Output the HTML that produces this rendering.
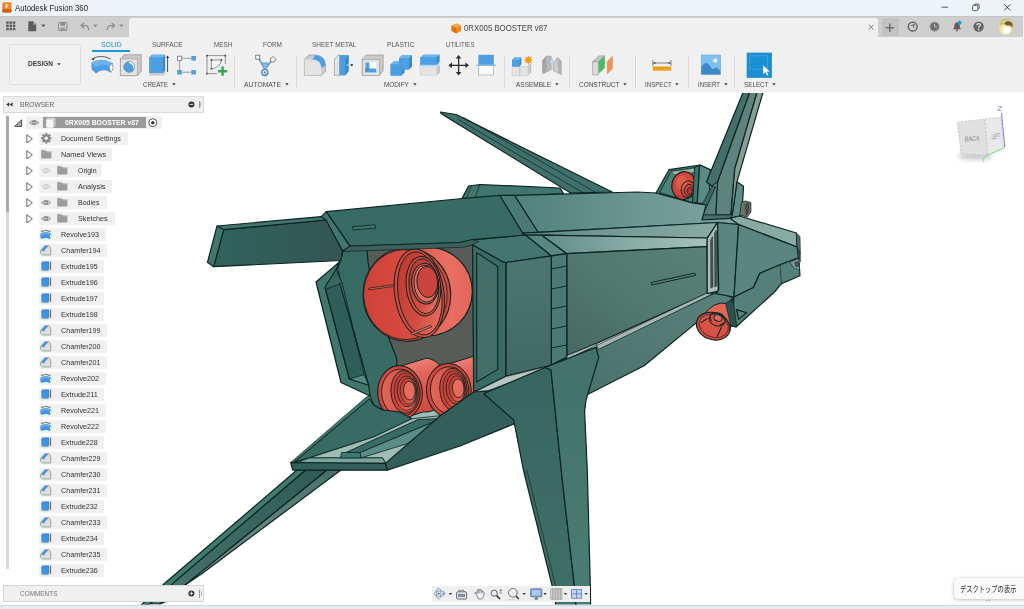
<!DOCTYPE html>
<html lang="ja"><head><meta charset="utf-8"><title>Autodesk Fusion 360</title>
<style>
html,body{margin:0;padding:0;}
body{width:1024px;height:609px;overflow:hidden;background:#fff;font-family:"Liberation Sans","Noto Sans CJK JP",sans-serif;}
#app{position:relative;width:1024px;height:609px;overflow:hidden;background:#fff;}
#canvas{position:absolute;left:0;top:0;width:1024px;height:609px;}
.t{position:absolute;white-space:nowrap;display:inline-block;transform-origin:0 50%;}
.i{position:absolute;overflow:visible;}
.row{position:absolute;background:#f0f0f0;height:12.6px;}
</style></head><body><div id="app">
<div id="canvas">
<svg class="i" style="left:0;top:0" width="1024" height="609" viewBox="0 0 1024 609"><defs>
<linearGradient id="gTop" x1="0" y1="0" x2="1" y2="0"><stop offset="0" stop-color="#4f817a"/><stop offset="0.55" stop-color="#6d9791"/><stop offset="1" stop-color="#7fa39d"/></linearGradient>
<linearGradient id="gSlab" x1="0" y1="0" x2="1" y2="0"><stop offset="0" stop-color="#30625c"/><stop offset="1" stop-color="#345651"/></linearGradient>
<linearGradient id="gB1" x1="0" y1="0" x2="1" y2="0"><stop offset="0" stop-color="#5a8680"/><stop offset="0.5" stop-color="#769c95"/><stop offset="1" stop-color="#88aaa3"/></linearGradient>
<linearGradient id="gCh" x1="0" y1="0" x2="1" y2="0"><stop offset="0" stop-color="#5e8d86"/><stop offset="0.5" stop-color="#86aaa3"/><stop offset="1" stop-color="#a6c1bb"/></linearGradient>
<linearGradient id="gSide" x1="1" y1="0" x2="0" y2="1"><stop offset="0" stop-color="#5a8178"/><stop offset="0.5" stop-color="#52796f"/><stop offset="1" stop-color="#476862"/></linearGradient>
<linearGradient id="gUnder" x1="0" y1="1" x2="1" y2="0"><stop offset="0" stop-color="#3f6a64"/><stop offset="0.5" stop-color="#4f7770"/><stop offset="1" stop-color="#5a8179"/></linearGradient>
<linearGradient id="gRB" x1="0" y1="0" x2="0" y2="1"><stop offset="0" stop-color="#4c7770"/><stop offset="1" stop-color="#416964"/></linearGradient>
<linearGradient id="gLegL" x1="0" y1="0" x2="0" y2="1"><stop offset="0" stop-color="#376660"/><stop offset="1" stop-color="#3f7068"/></linearGradient>
<linearGradient id="gLegR" x1="0" y1="0" x2="0" y2="1"><stop offset="0" stop-color="#427269"/><stop offset="1" stop-color="#4a7d73"/></linearGradient>
<linearGradient id="gFin3" x1="1" y1="0" x2="0" y2="1"><stop offset="0" stop-color="#456e68"/><stop offset="1" stop-color="#86a39c"/></linearGradient>
<linearGradient id="gFin2" x1="1" y1="0" x2="0" y2="1"><stop offset="0" stop-color="#2f5a55"/><stop offset="1" stop-color="#4a756e"/></linearGradient>
<linearGradient id="gRed" x1="0" y1="0" x2="1" y2="0"><stop offset="0" stop-color="#d24a3f"/><stop offset="0.75" stop-color="#e96f62"/><stop offset="1" stop-color="#e4655a"/></linearGradient>
<linearGradient id="gCup" x1="0" y1="0" x2="1" y2="0"><stop offset="0" stop-color="#cd4238"/><stop offset="0.5" stop-color="#d94a3f"/><stop offset="1" stop-color="#dc5045"/></linearGradient>
<linearGradient id="gCup2" x1="0" y1="0" x2="1" y2="1"><stop offset="0" stop-color="#b8372e"/><stop offset="0.55" stop-color="#d24a3f"/><stop offset="1" stop-color="#ea7b6d"/></linearGradient>
<linearGradient id="gRedV" x1="0" y1="0" x2="0.25" y2="1"><stop offset="0" stop-color="#f09183"/><stop offset="0.35" stop-color="#e2645a"/><stop offset="1" stop-color="#cf463b"/></linearGradient>
<linearGradient id="gCup3" x1="0" y1="0" x2="1" y2="0"><stop offset="0" stop-color="#e2665a"/><stop offset="1" stop-color="#d04439"/></linearGradient>
<clipPath id="cs"><rect x="420" y="350" width="54.4" height="80"/></clipPath>
<clipPath id="cv"><rect x="0" y="92.6" width="1024" height="512"/></clipPath>
</defs><g clip-path="url(#cv)">
<path d="M440.5 112.0L456.0 114.5L612.2 192.0L571.0 193.2L454.7 122.0L441.0 113.4Z" fill="#40706a" stroke="#0b2421" stroke-width="1.2" stroke-linejoin="round"/>
<path d="M463.5 117.4L596.0 192.6" fill="none" stroke="#0b2421" stroke-width="0.7" stroke-linecap="round" stroke-linejoin="round"/>
<path d="M458.5 119.6L583.5 193.0" fill="none" stroke="#0b2421" stroke-width="0.7" stroke-linecap="round" stroke-linejoin="round"/>
<path d="M462.0 198.6L468.5 186.0L480.0 184.5L560.0 188.0L563.5 193.6L520.0 196.0Z" fill="#41766e" stroke="#0b2421" stroke-width="1.2" stroke-linejoin="round"/>
<path d="M480.0 184.5L475.0 197.6" fill="none" stroke="#0b2421" stroke-width="0.7" stroke-linecap="round" stroke-linejoin="round"/>
<path d="M471.5 185.6L466.5 198.2" fill="none" stroke="#0b2421" stroke-width="0.6" stroke-linecap="round" stroke-linejoin="round"/>
<path d="M656.0 193.0L669.0 169.7L700.0 165.0L710.3 169.7L709.0 204.0L692.5 203.0Z" fill="#41786f" stroke="#0b2421" stroke-width="1.2" stroke-linejoin="round"/>
<path d="M659.6 192.6L671.0 171.4L696.6 167.6L692.5 202.5Z" fill="#4d817a" stroke="#0b2421" stroke-width="0.8" stroke-linejoin="round"/>
<path d="M671.0 171.4L696.6 167.6L695.6 172.4L674.4 175.0Z" fill="#98b4ad" stroke="#0b2421" stroke-width="0.6" stroke-linejoin="round"/>
<ellipse cx="683.8" cy="185.6" rx="12" ry="14" fill="#c53d34" stroke="#0b2421" stroke-width="1.1" transform="rotate(8 683.8 185.6)"/>
<ellipse cx="683.2" cy="184.6" rx="9.6" ry="11.6" fill="#d3473c" transform="rotate(8 683.2 184.6)"/>
<ellipse cx="681.6" cy="182.6" rx="5.6" ry="7" fill="#dd5b4f" transform="rotate(8 681.6 182.6)"/>
<ellipse cx="688" cy="189.4" rx="6.8" ry="8.6" fill="none" stroke="#0b2421" stroke-width="0.9" transform="rotate(8 688 189.4)"/>
<ellipse cx="689" cy="190.4" rx="4.6" ry="6" fill="none" stroke="#0b2421" stroke-width="0.9" transform="rotate(8 689 190.4)"/>
<ellipse cx="689.8" cy="191" rx="2.6" ry="3.6" fill="#b8362d" stroke="#0b2421" stroke-width="0.8" transform="rotate(8 689.8 191)"/>
<path d="M694.6 167.8L699.6 165.2L697.2 203.0L692.5 202.5Z" fill="#3d746c" stroke="#0b2421" stroke-width="0.9" stroke-linejoin="round"/>
<path d="M699.6 165.2L700.0 165.0L710.3 169.7L709.0 204.0L697.2 203.0Z" fill="#5a8b84" stroke="#0b2421" stroke-width="1.2" stroke-linejoin="round"/>
<path d="M736.9 181.8L743.5 186.2L742.0 213.0L740.4 216.4L731.0 218.4L732.4 213.5Z" fill="#5f8c86" stroke="#0b2421" stroke-width="1.2" stroke-linejoin="round"/>
<path d="M741.3 202.4L745.0 201.0L750.9 202.4L750.9 212.0L747.2 217.2L739.8 215.0Z" fill="#6f706a" stroke="#0b2421" stroke-width="0.7" stroke-linejoin="round"/>
<path d="M745.6 204.0L748.6 203.6L748.4 212.0L746.0 215.0Z" fill="#55564f" stroke="#0b2421" stroke-width="0.5" stroke-linejoin="round"/>
<path d="M744.0 90.0L750.6 90.0L717.7 181.8L711.8 186.2L706.6 181.8Z" fill="#44706b" stroke="#0b2421" stroke-width="1.2" stroke-linejoin="round"/>
<path d="M711.8 186.2L715.5 187.0L702.9 215.0L697.0 214.3Z" fill="#3b6661" stroke="#0b2421" stroke-width="0.7" stroke-linejoin="round"/>
<path d="M717.7 181.8L711.8 186.2L715.5 187.0L702.9 215.0L715.9 214.6L716.6 200.0Z" fill="#587f79" stroke="#0b2421" stroke-width="0.7" stroke-linejoin="round"/>
<path d="M750.6 90.0L757.7 90.0L734.7 169.2L731.0 215.0L715.9 214.6L716.6 200.0L717.7 181.8Z" fill="#5d837c" stroke="#0b2421" stroke-width="1.2" stroke-linejoin="round"/>
<path d="M757.7 90.0L763.7 90.0L736.9 181.8L732.4 213.5L731.0 215.0L734.7 169.2Z" fill="#879e97" stroke="#0b2421" stroke-width="1.2" stroke-linejoin="round"/>
<path d="M697.0 214.3L702.9 215.0L731.0 215.0L732.4 213.5L731.0 218.2L716.2 219.4L702.2 220.2Z" fill="#4a6f6a" stroke="#0b2421" stroke-width="0.7" stroke-linejoin="round"/>
<path d="M472.0 392.4L506.0 375.0L551.0 364.0L566.8 356.0L598.0 346.0L601.0 352.0L522.0 421.0L474.0 397.0Z" fill="#33605a"/>
<path d="M487.5 388.7L596.0 347.5L713.3 293.6L718.0 291.4L733.0 298.0L726.3 304.4L695.6 323.4L644.1 365.8L589.0 393.8L513.7 423.7Z" fill="url(#gUnder)" stroke="#0b2421" stroke-width="1.2" stroke-linejoin="round"/>
<path d="M514.4 195.3L637.5 192.0L656.0 193.0L692.5 202.8L706.0 205.0L702.0 220.0L730.0 218.3L739.4 216.0L738.6 224.5L717.5 222.5L538.0 232.3Z" fill="url(#gTop)" stroke="#0b2421" stroke-width="1.2" stroke-linejoin="round"/>
<path d="M499.6 195.3L514.4 195.3L538.0 232.3L522.5 233.0Z" fill="#4a7a74" stroke="#0b2421" stroke-width="1.2" stroke-linejoin="round"/>
<path d="M538.0 232.3L717.5 222.5L707.5 238.0L541.7 235.2L525.5 234.8L522.5 233.0Z" fill="url(#gB1)" stroke="#0b2421" stroke-width="1.2" stroke-linejoin="round"/>
<path d="M541.7 235.2L707.5 238.0L707.0 246.6L566.8 253.7Z" fill="url(#gCh)" stroke="#0b2421" stroke-width="1.2" stroke-linejoin="round"/>
<path d="M525.5 235.0L541.7 235.2L566.8 253.7L551.3 255.9Z" fill="#5a8680" stroke="#0b2421" stroke-width="1.2" stroke-linejoin="round"/>
<path d="M566.8 253.7L707.0 246.6L707.4 293.4L596.0 343.6L566.8 355.6Z" fill="url(#gSide)" stroke="#0b2421" stroke-width="1.2" stroke-linejoin="round"/>
<path d="M706.5 293.2L713.3 293.6L598.0 349.6L596.0 343.6L566.8 355.6L566.8 359.4Z" fill="#a9b7b2" stroke="#0b2421" stroke-width="0.7" stroke-linejoin="round"/>
<path d="M651.0 282.5L695.0 273.0L695.6 275.4L651.6 285.0Z" fill="#557a73" stroke="#0b2421" stroke-width="0.9" stroke-linejoin="round"/>
<path d="M551.3 255.9L566.8 253.7L566.8 357.0L551.3 365.0Z" fill="#4a7a73" stroke="#0b2421" stroke-width="1.2" stroke-linejoin="round"/>
<path d="M551.3 269.0L566.8 266.0" fill="none" stroke="#0b2421" stroke-width="0.9" stroke-linecap="round" stroke-linejoin="round"/>
<path d="M551.3 289.0L566.8 286.0" fill="none" stroke="#0b2421" stroke-width="0.9" stroke-linecap="round" stroke-linejoin="round"/>
<path d="M551.3 309.0L566.8 306.0" fill="none" stroke="#0b2421" stroke-width="0.9" stroke-linecap="round" stroke-linejoin="round"/>
<path d="M551.3 329.0L566.8 326.0" fill="none" stroke="#0b2421" stroke-width="0.9" stroke-linecap="round" stroke-linejoin="round"/>
<path d="M551.3 348.0L566.8 345.0" fill="none" stroke="#0b2421" stroke-width="0.9" stroke-linecap="round" stroke-linejoin="round"/>
<path d="M707.2 238.4L717.5 222.5L718.2 291.2L707.2 293.6Z" fill="#aebcb7" stroke="#0b2421" stroke-width="1.2" stroke-linejoin="round"/>
<path d="M710.6 240.0L712.6 236.6L713.0 287.0L710.8 288.0Z" fill="#4a5a57" stroke="#0b2421" stroke-width="0.5" stroke-linejoin="round"/>
<path d="M714.6 233.0L716.4 230.0L716.8 286.0L714.8 286.8Z" fill="#4a5a57" stroke="#0b2421" stroke-width="0.5" stroke-linejoin="round"/>
<path d="M717.5 222.5L738.6 224.5L734.0 297.0L716.0 293.7L718.7 290.0Z" fill="#5a8680" stroke="#0b2421" stroke-width="1.2" stroke-linejoin="round"/>
<path d="M730.0 218.3L739.4 216.0L796.4 233.0L797.0 247.0L738.6 224.5Z" fill="#88aaa3" stroke="#0b2421" stroke-width="1.2" stroke-linejoin="round"/>
<path d="M738.6 224.5L797.0 247.0L798.7 257.8L780.0 264.8L759.7 273.4L753.4 287.5L734.0 297.0Z" fill="#5b867f" stroke="#0b2421" stroke-width="1.2" stroke-linejoin="round"/>
<path d="M734.0 297.0L753.4 287.5L759.7 273.4L780.0 264.8L798.7 257.8L800.0 275.8L781.5 283.6L774.5 292.0L736.0 327.0L731.5 325.8Z" fill="#557f79" stroke="#0b2421" stroke-width="1.2" stroke-linejoin="round"/>
<path d="M780.0 264.8L781.5 283.6" fill="none" stroke="#0b2421" stroke-width="0.6" stroke-linecap="round" stroke-linejoin="round"/>
<path d="M796.4 233.0L800.0 236.4L800.4 254.0L797.0 247.0Z" fill="#4c6f6a" stroke="#0b2421" stroke-width="0.6" stroke-linejoin="round"/>
<path d="M797.0 247.0L800.4 254.0L800.4 262.0L798.7 257.8Z" fill="#3c4a48" stroke="#0b2421" stroke-width="0.5" stroke-linejoin="round"/>
<path d="M790.0 262.0L798.7 258.6L799.6 270.0L794.0 268.4Z" fill="#7f9a94" stroke="#0b2421" stroke-width="0.5" stroke-linejoin="round"/>
<path d="M794.6 262.6L798.4 261.6L798.8 266.4L795.6 266.6Z" fill="#4a5452" stroke="#0b2421" stroke-width="0.4" stroke-linejoin="round"/>
<path d="M703 316Q714 300.6 726.4 303.4Q733.6 309 731.6 322L729.6 332L712 338Z" fill="#e1675b" stroke="#0b2421" stroke-width="1"/>
<ellipse cx="713.2" cy="326.2" rx="17.2" ry="13.4" fill="#d5483d" stroke="#0b2421" stroke-width="1.2" transform="rotate(20 713.2 326.2)"/>
<ellipse cx="713.8" cy="325.8" rx="15" ry="11.4" fill="#d95045" stroke="#0b2421" stroke-width="0.6" transform="rotate(20 713.8 325.8)"/>
<ellipse cx="717.2" cy="319.4" rx="8.2" ry="6.4" fill="none" stroke="#0b2421" stroke-width="1.1" transform="rotate(20 717.2 319.4)"/>
<ellipse cx="718" cy="318" rx="4.2" ry="3.2" fill="#e3695c" stroke="#0b2421" stroke-width="1.0" transform="rotate(20 718 318)"/>
<path d="M701.6 322.4L707.0 318.6" fill="none" stroke="#0b2421" stroke-width="1.1" stroke-linecap="round" stroke-linejoin="round"/>
<path d="M721.4 327.6L717.2 336.2" fill="none" stroke="#0b2421" stroke-width="1.1" stroke-linecap="round" stroke-linejoin="round"/>
<path d="M709.6 316.0L711.4 320.6" fill="none" stroke="#0b2421" stroke-width="0.9" stroke-linecap="round" stroke-linejoin="round"/>
<path d="M724.6 322.6L720.6 324.6" fill="none" stroke="#0b2421" stroke-width="0.9" stroke-linecap="round" stroke-linejoin="round"/>
<path d="M725.6 303.4L733.0 298.6L736.8 327.0L731.0 326.2Z" fill="#2a524d" stroke="#0b2421" stroke-width="0.7" stroke-linejoin="round"/>
<path d="M736.6 309.6L746.6 312.8L738.6 319.4Z" fill="#557f79" stroke="#0b2421" stroke-width="1.2" stroke-linejoin="round"/>
<path d="M731.5 303.0L734.0 297.0" fill="none" stroke="#0b2421" stroke-width="0.6" stroke-linecap="round" stroke-linejoin="round"/>
<path d="M360.0 247.0L476.0 243.0L477.0 394.0L380.0 402.0Z" fill="#585c59"/>
<path d="M382.5 410.0L400.0 404.0L478.0 388.0L478.0 396.0L440.0 417.5L412.0 418.7L390.0 428.7Z" fill="#9fbdb5"/>
<path d="M342.5 252.0L345.0 246.5L367.0 249.0L368.0 262.0L374.0 296.0L387.5 335.0L396.6 358.0L397.0 372.0L384.0 392.0L382.5 410.0L373.7 405.0L370.0 396.0L367.5 385.0L337.5 268.5L340.0 261.5Z" fill="#396b65" stroke="#0b2421" stroke-width="1.2" stroke-linejoin="round"/>
<path d="M342.5 252.0L340.0 261.5L316.0 282.0L341.0 382.5L370.0 396.0L368.6 385.0L349.4 379.0L325.1 287.3L336.1 269.6Z" fill="#41766e" stroke="#0b2421" stroke-width="1.2" stroke-linejoin="round"/>
<path d="M325.1 287.3L336.1 269.6L368.6 385.0L349.4 379.0Z" fill="#2f5d57" stroke="#0b2421" stroke-width="1.2" stroke-linejoin="round"/>
<path d="M336.1 269.6L342.0 282.9L364.2 374.6L368.6 385.0Z" fill="#3c6e68" stroke="#0b2421" stroke-width="0.8" stroke-linejoin="round"/>
<path d="M325.1 287.3L336.1 269.6L342.0 282.9L327.2 288.8Z" fill="#37665f" stroke="#0b2421" stroke-width="0.8" stroke-linejoin="round"/>
<path d="M349.4 379.0L364.2 374.6L368.6 385.0Z" fill="#5a8780" stroke="#0b2421" stroke-width="0.8" stroke-linejoin="round"/>
<ellipse cx="427.3" cy="291.5" rx="45" ry="44.4" fill="url(#gRed)" stroke="#0b2421" stroke-width="1.1"/>
<ellipse cx="406.9" cy="294.6" rx="43.8" ry="46.6" fill="#d3473c" stroke="#0b2421" stroke-width="1.1" transform="rotate(-3 406.9 294.6)"/>
<ellipse cx="405.4" cy="294.6" rx="41.8" ry="45" fill="url(#gCup)" stroke="#0b2421" stroke-width="0.8" transform="rotate(-3 405.4 294.6)"/>
<ellipse cx="419.3" cy="293.3" rx="24.6" ry="44.6" fill="#d74a3f" stroke="#0b2421" stroke-width="1.0" transform="rotate(-8 419.3 293.3)"/>
<ellipse cx="419.8" cy="293.3" rx="21.8" ry="41.800000000000004" fill="url(#gCup2)" stroke="#0b2421" stroke-width="0.9" transform="rotate(-8 419.8 293.3)"/>
<ellipse cx="423.4" cy="286.2" rx="17.2" ry="29.8" fill="#d74a3f" stroke="#0b2421" stroke-width="1.0" transform="rotate(-6 423.4 286.2)"/>
<ellipse cx="423.9" cy="286.2" rx="14.799999999999999" ry="27.400000000000002" fill="url(#gCup2)" stroke="#0b2421" stroke-width="0.9" transform="rotate(-6 423.9 286.2)"/>
<ellipse cx="425.1" cy="283.7" rx="13.4" ry="20.4" fill="#dc5348" stroke="#0b2421" stroke-width="1.0" transform="rotate(-5 425.1 283.7)"/>
<ellipse cx="425.6" cy="283.7" rx="11.6" ry="18.599999999999998" fill="#e46d60" stroke="#0b2421" stroke-width="0.9" transform="rotate(-5 425.6 283.7)"/>
<ellipse cx="427.3" cy="281.9" rx="10.4" ry="15.6" fill="#c9443a" stroke="#0b2421" stroke-width="0.9" transform="rotate(-4 427.3 281.9)"/>
<path d="M368.5 288.2L393.8 284.6L394.0 286.4L368.8 290.0Z" fill="#e0584c" stroke="#0b2421" stroke-width="0.7" stroke-linejoin="round"/>
<path d="M411.0 333.2L430.9 325.2L431.6 326.8L412.0 335.0Z" fill="#e87a6c" stroke="#0b2421" stroke-width="0.7" stroke-linejoin="round"/>
<path d="M401.6 365.8L426.6 358.1A22.3 26.9 -4 0 1 423.4 411.9L398.4 419.59999999999997Z" fill="url(#gRedV)" stroke="#0b2421" stroke-width="1"/>
<ellipse cx="400" cy="392.7" rx="22.3" ry="26.9" fill="#d6463b" stroke="#0b2421" stroke-width="1.0" transform="rotate(-4 400 392.7)"/>
<ellipse cx="400.8" cy="392.7" rx="19.2" ry="23.6" fill="url(#gCup3)" stroke="#0b2421" stroke-width="0.9" transform="rotate(-4 400.8 392.7)"/>
<ellipse cx="404.6" cy="392.0" rx="13.6" ry="21.3" fill="#cf4439" stroke="#0b2421" stroke-width="0.9" transform="rotate(-4 404.6 392.0)"/>
<ellipse cx="405.6" cy="391.8" rx="11.4" ry="18.8" fill="url(#gCup2)" stroke="#0b2421" stroke-width="0.6" transform="rotate(-4 405.6 391.8)"/>
<ellipse cx="407" cy="391.3" rx="9.6" ry="15.4" fill="#cf4439" stroke="#0b2421" stroke-width="0.8" transform="rotate(-4 407 391.3)"/>
<ellipse cx="408" cy="391.09999999999997" rx="7.8" ry="13" fill="url(#gCup2)" stroke="#0b2421" stroke-width="0.6" transform="rotate(-4 408 391.09999999999997)"/>
<ellipse cx="409.4" cy="390.7" rx="5.8" ry="9.4" fill="#e66a5d" stroke="#0b2421" stroke-width="0.8" transform="rotate(-4 409.4 390.7)"/>
<g clip-path="url(#cs)">
<path d="M450.40000000000003 363.40000000000003L475.40000000000003 355.70000000000005A22.3 26.9 -4 0 1 472.2 409.5L447.2 417.2Z" fill="url(#gRedV)" stroke="#0b2421" stroke-width="1"/>
<ellipse cx="448.8" cy="390.3" rx="22.3" ry="26.9" fill="#d6463b" stroke="#0b2421" stroke-width="1.0" transform="rotate(-4 448.8 390.3)"/>
<ellipse cx="449.6" cy="390.3" rx="19.2" ry="23.6" fill="url(#gCup3)" stroke="#0b2421" stroke-width="0.9" transform="rotate(-4 449.6 390.3)"/>
<ellipse cx="453.40000000000003" cy="389.6" rx="13.6" ry="21.3" fill="#cf4439" stroke="#0b2421" stroke-width="0.9" transform="rotate(-4 453.40000000000003 389.6)"/>
<ellipse cx="454.40000000000003" cy="389.40000000000003" rx="11.4" ry="18.8" fill="url(#gCup2)" stroke="#0b2421" stroke-width="0.6" transform="rotate(-4 454.40000000000003 389.40000000000003)"/>
<ellipse cx="455.8" cy="388.90000000000003" rx="9.6" ry="15.4" fill="#cf4439" stroke="#0b2421" stroke-width="0.8" transform="rotate(-4 455.8 388.90000000000003)"/>
<ellipse cx="456.8" cy="388.7" rx="7.8" ry="13" fill="url(#gCup2)" stroke="#0b2421" stroke-width="0.6" transform="rotate(-4 456.8 388.7)"/>
<ellipse cx="458.2" cy="388.3" rx="5.8" ry="9.4" fill="#e66a5d" stroke="#0b2421" stroke-width="0.8" transform="rotate(-4 458.2 388.3)"/>
</g>
<path d="M472.5 244.7L503.7 262.2L506.0 262.2L506.0 376.0L476.0 391.0L473.7 391.0Z" fill="#396b65" stroke="#0b2421" stroke-width="1.2" stroke-linejoin="round"/>
<path d="M476.7 252.6L497.7 266.5L497.7 369.4L476.7 382.0Z" fill="#446f69" stroke="#0b2421" stroke-width="1.1" stroke-linejoin="round"/>
<path d="M472.5 240.0L524.7 235.0L525.5 235.0L551.3 255.9L506.2 262.5L503.7 262.2L472.5 244.7Z" fill="#447570" stroke="#0b2421" stroke-width="1.2" stroke-linejoin="round"/>
<path d="M506.2 262.5L551.3 255.9L551.3 365.0L506.0 376.0Z" fill="url(#gRB)" stroke="#0b2421" stroke-width="1.2" stroke-linejoin="round"/>
<path d="M326.2 211.7L462.5 198.5L499.6 195.3L522.5 233.0L525.5 235.0L472.5 239.6L460.0 242.7L350.0 246.2Z" fill="#396b65" stroke="#0b2421" stroke-width="1.2" stroke-linejoin="round"/>
<path d="M321.2 216.7L326.2 211.7L350.0 246.2L342.6 251.1Z" fill="#41766e" stroke="#0b2421" stroke-width="1.2" stroke-linejoin="round"/>
<path d="M350.0 246.2L460.0 242.7L472.5 239.6L478.7 241.6L472.5 244.7L463.7 247.2L342.6 251.6Z" fill="#3d605b" stroke="#0b2421" stroke-width="0.7" stroke-linejoin="round"/>
<path d="M352.5 226.7L375.0 224.8L376.0 228.0L353.5 230.0Z" fill="#41736c" stroke="#0b2421" stroke-width="0.8" stroke-linejoin="round"/>
<path d="M223.7 229.7L326.0 220.0L342.6 251.1L341.0 260.5L213.7 266.7Z" fill="url(#gSlab)" stroke="#0b2421" stroke-width="1.2" stroke-linejoin="round"/>
<path d="M217.0 226.0L321.2 216.7L326.0 220.0L223.7 229.7Z" fill="#41766e" stroke="#0b2421" stroke-width="1.2" stroke-linejoin="round"/>
<path d="M217.0 226.0L223.7 229.7L213.7 266.7L207.5 262.2Z" fill="#41766e" stroke="#0b2421" stroke-width="1.2" stroke-linejoin="round"/>
<path d="M297.0 470.0L305.8 470.0L176.4 580.4L150.0 604.0L140.0 606.0L165.0 583.0Z" fill="#3f7a71" stroke="#0b2421" stroke-width="1.2" stroke-linejoin="round"/>
<path d="M305.8 470.0L327.2 470.0L187.7 582.9L160.0 604.0L150.0 604.0L176.4 580.4Z" fill="url(#gFin2)" stroke="#0b2421" stroke-width="1.2" stroke-linejoin="round"/>
<path d="M327.2 470.0L341.0 470.0L201.5 574.0L186.5 584.0L170.0 600.0L160.0 604.0L187.7 582.9Z" fill="url(#gFin3)" stroke="#0b2421" stroke-width="1.2" stroke-linejoin="round"/>
<path d="M369.6 398.6L293.4 462.6L309.3 457.9L373.8 437.0L412.0 418.7L400.0 412.0L382.5 410.0L373.7 405.0Z" fill="#396b65" stroke="#0b2421" stroke-width="1.2" stroke-linejoin="round"/>
<path d="M367.5 396.0L290.8 462.3L293.4 462.6L369.6 398.6L373.7 405.0L370.0 396.0Z" fill="#41766e" stroke="#0b2421" stroke-width="0.6" stroke-linejoin="round"/>
<path d="M309.3 457.9L373.8 437.0L412.0 418.7L441.0 415.6L386.0 463.6L382.5 457.9Z" fill="#9fbdb5" stroke="#0b2421" stroke-width="0.8" stroke-linejoin="round"/>
<path d="M296.6 462.8L309.3 457.9L382.5 457.9L385.5 463.4Z" fill="#7ba49c" stroke="#0b2421" stroke-width="0.8" stroke-linejoin="round"/>
<path d="M346.0 452.5L360.0 452.6L442.0 418.4L418.0 419.6Z" fill="#396b65" stroke="#0b2421" stroke-width="0.9" stroke-linejoin="round"/>
<path d="M360.0 452.6L442.0 418.4L442.4 420.4L407.0 443.8L361.0 457.9Z" fill="#5b8d86" stroke="#0b2421" stroke-width="0.8" stroke-linejoin="round"/>
<path d="M341.5 452.6L346.0 452.5L360.0 452.6L361.0 457.9L340.5 457.9Z" fill="#3f7a72" stroke="#0b2421" stroke-width="0.8" stroke-linejoin="round"/>
<path d="M290.7 462.5L385.5 463.4L387.4 470.2L292.7 470.2Z" fill="#335e59" stroke="#0b2421" stroke-width="1.2" stroke-linejoin="round"/>
<path d="M385.5 463.4L440.0 416.0L474.0 391.8L488.0 390.9L520.0 416.0L520.0 421.4L460.0 446.0L387.4 470.2Z" fill="#335e59" stroke="#0b2421" stroke-width="1.2" stroke-linejoin="round"/>
<path d="M476.0 391.4L506.0 376.6L551.0 365.6L545.0 368.0L524.0 377.6L488.0 390.6Z" fill="#b8c6c2" stroke="#0b2421" stroke-width="0.6" stroke-linejoin="round"/>
<path d="M483.7 393.7L545.0 367.5L551.0 370.0L562.5 482.0L574.3 585.3L576.0 606.0L556.0 606.0L552.0 585.3L523.4 470.0L513.7 420.0Z" fill="url(#gLegL)" stroke="#0b2421" stroke-width="1.2" stroke-linejoin="round"/>
<path d="M551.0 370.0L545.0 367.5L596.0 347.5L598.7 357.5L586.0 400.0L584.6 411.6L587.3 470.0L590.3 585.3L590.6 606.0L576.0 606.0L574.3 585.3L562.5 482.0Z" fill="url(#gLegR)" stroke="#0b2421" stroke-width="1.2" stroke-linejoin="round"/>
<path d="M526.8 470.0L555.4 585.3" fill="none" stroke="#0b2421" stroke-width="0.6" stroke-linecap="round" stroke-linejoin="round"/>
</g></svg>
</div>
<div style="position:absolute;left:0px;top:0px;width:1024px;height:15.6px;background:#eef2f9;"></div>
<svg class="i" style="left:2px;top:2px;" width="10" height="11" viewBox="0 0 10 11"><rect x="0.3" y="0.3" width="9.2" height="10.2" rx="1.6" fill="#f5811e"/><rect x="0.3" y="7.2" width="9.2" height="3.3" rx="1.2" fill="#c95a10"/><path d="M3.6 6.6V2.2H6.6V3.1H4.7V4H6.3V4.9H4.7V6.6Z" fill="#fff"/></svg>
<span class="t" style="left:15.20px;top:4.00px;font-size:8.6px;line-height:8.6px;color:#1a1a1a;transform:scaleX(0.9036);">Autodesk Fusion 360</span>
<svg class="i" style="left:938px;top:0px;" width="80" height="15" viewBox="0 0 80 15"><path d="M3.6 7.2H10" stroke="#333" stroke-width="0.8" fill="none"/><rect x="34.6" y="5.4" width="5.2" height="5.2" rx="1" fill="none" stroke="#333" stroke-width="0.8"/><path d="M36.2 5.2V4.9Q36.2 4.1 37 4.1H40.2Q41.2 4.1 41.2 5.1V8.2Q41.2 9 40.4 9" fill="none" stroke="#333" stroke-width="0.8"/><path d="M66.4 4.4L72.2 10.4M72.2 4.4L66.4 10.4" stroke="#222" stroke-width="0.85" fill="none"/></svg>
<div style="position:absolute;left:0px;top:15.6px;width:1022.6px;height:21.0px;background:#cecece;"></div>
<div style="position:absolute;left:0px;top:15.6px;width:1022.6px;height:1.799999999999999px;background:#c5c5c5;"></div>
<div style="position:absolute;left:1022.6px;top:15.6px;width:1.3999999999999773px;height:21.0px;background:#f2f2f2;"></div>
<div style="position:absolute;left:0px;top:36.6px;width:1024px;height:53.800000000000004px;background:#f0f0f0;"></div>
<div style="position:absolute;left:0px;top:90.4px;width:1024px;height:2.1999999999999886px;background:linear-gradient(#ebebeb,#fafafa);"></div>
<div style="position:absolute;left:129px;top:17.6px;width:749.4px;height:19.4px;background:#f0f0f0;border-radius:2.5px 2.5px 0 0;"></div>
<svg class="i" style="left:6px;top:21px;" width="10" height="10" viewBox="0 0 10 10"><rect x="0.2" y="0.4" width="2.5" height="2.4" fill="#5c5c5c"/><rect x="0.2" y="3.6" width="2.5" height="2.4" fill="#5c5c5c"/><rect x="0.2" y="6.800000000000001" width="2.5" height="2.4" fill="#5c5c5c"/><rect x="3.5" y="0.4" width="2.5" height="2.4" fill="#5c5c5c"/><rect x="3.5" y="3.6" width="2.5" height="2.4" fill="#5c5c5c"/><rect x="3.5" y="6.800000000000001" width="2.5" height="2.4" fill="#5c5c5c"/><rect x="6.8" y="0.4" width="2.5" height="2.4" fill="#5c5c5c"/><rect x="6.8" y="3.6" width="2.5" height="2.4" fill="#5c5c5c"/><rect x="6.8" y="6.800000000000001" width="2.5" height="2.4" fill="#5c5c5c"/></svg>
<svg class="i" style="left:28px;top:20.5px;" width="9" height="11" viewBox="0 0 9 11"><path d="M0.3 0.3H5.2L8.2 3.4V10.3H0.3Z" fill="#5c5c5c"/><path d="M5.2 0.3V3.4H8.2Z" fill="#cecece"/><path d="M5.6 0.6V3H8" fill="none" stroke="#5c5c5c" stroke-width="0.5"/></svg>
<svg class="i" style="left:41px;top:24.4px" width="5.0" height="3.75" viewBox="0 0 4 3"><path d="M0.2 0.3H3.6L1.9 2.5Z" fill="#5c5c5c"/></svg>
<svg class="i" style="left:58px;top:21.5px;" width="10" height="9.5" viewBox="0 0 10 9.5"><rect x="0.5" y="0.5" width="8.4" height="8" rx="0.6" fill="none" stroke="#8a8a8a" stroke-width="1"/><rect x="2.4" y="0.6" width="4.6" height="3" fill="#8a8a8a"/><rect x="2.2" y="5.6" width="5" height="2.9" fill="#9a9a9a"/></svg>
<svg class="i" style="left:80px;top:21.5px;" width="10" height="9" viewBox="0 0 10 9"><path d="M4.2 1L1 3.6L4.2 6.2M1.2 3.6H5.6Q8.6 3.6 8.6 8.2" fill="none" stroke="#8d8d8d" stroke-width="1.1"/></svg>
<svg class="i" style="left:93.3px;top:24.4px" width="5.0" height="3.75" viewBox="0 0 4 3"><path d="M0.2 0.3H3.6L1.9 2.5Z" fill="#8d8d8d"/></svg>
<svg class="i" style="left:106px;top:21.5px;" width="10" height="9" viewBox="0 0 10 9"><path d="M5.6 1L8.8 3.6L5.6 6.2M8.6 3.6H4.2Q1.2 3.6 1.2 8.2" fill="none" stroke="#8d8d8d" stroke-width="1.1"/></svg>
<svg class="i" style="left:119.3px;top:24.4px" width="5.0" height="3.75" viewBox="0 0 4 3"><path d="M0.2 0.3H3.6L1.9 2.5Z" fill="#8d8d8d"/></svg>
<svg class="i" style="left:451px;top:22.6px;" width="11" height="11" viewBox="0 0 11 11"><path d="M5.3 0.4L10 2.6V8L5.3 10.4L0.6 8V2.6Z" fill="#f58a1f"/><path d="M5.3 5V10.4L0.6 8V2.6Z" fill="#e0700f"/><path d="M5.3 0.4L10 2.6L5.3 5L0.6 2.6Z" fill="#fba94e"/></svg>
<span class="t" style="left:464.40px;top:23.00px;font-size:9.6px;line-height:9.6px;color:#444;transform:scaleX(0.8141);">0RX005 BOOSTER v87</span>
<svg class="i" style="left:867.5px;top:24px;" width="7" height="7" viewBox="0 0 7 7"><path d="M0.8 0.8L5.6 5.6M5.6 0.8L0.8 5.6" stroke="#777" stroke-width="0.9" fill="none"/></svg>
<div style="position:absolute;left:881.6px;top:18.4px;width:17.0px;height:17.6px;background:#c2c2c2;border-radius:1.5px;"></div>
<svg class="i" style="left:885px;top:22.5px;" width="10" height="10" viewBox="0 0 10 10"><path d="M4.8 0.6V9M0.6 4.8H9" stroke="#6e6e6e" stroke-width="1.5" fill="none"/></svg>
<svg class="i" style="left:907px;top:20.5px;" width="12" height="12" viewBox="0 0 12 12"><circle cx="5.7" cy="5.7" r="4.4" fill="none" stroke="#666" stroke-width="1.5"/><path d="M5.8 5.9L8.6 2.4L3.4 2.9Z" fill="#cecece"/><path d="M4.2 4.6L7.2 3.6L6.4 6.6" fill="none" stroke="#666" stroke-width="1.1"/></svg>
<svg class="i" style="left:929px;top:20.5px;" width="12" height="12" viewBox="0 0 12 12"><circle cx="5.6" cy="5.6" r="5.1" fill="#9a9a9a"/><circle cx="5.6" cy="5.6" r="3.9" fill="#6d6d6d"/><path d="M5.6 3V5.9H7.8" fill="none" stroke="#c8c8c8" stroke-width="1"/></svg>
<svg class="i" style="left:951px;top:20px;" width="13" height="13" viewBox="0 0 13 13"><path d="M6 2.2Q3.2 2.6 3.2 6.2Q3.2 8.2 1.8 9.2H10.2Q8.8 8.2 8.8 6.2Q8.8 2.6 6 2.2Z" fill="#6b5a58"/><circle cx="6" cy="10.3" r="1.1" fill="#6b5a58"/><circle cx="8.6" cy="2.8" r="2" fill="#1f9ddb"/></svg>
<svg class="i" style="left:973px;top:20.5px;" width="12" height="12" viewBox="0 0 12 12"><circle cx="5.6" cy="5.6" r="5.2" fill="#666"/><path d="M3.9 4.3Q3.9 2.6 5.6 2.6Q7.3 2.6 7.3 4.1Q7.3 5 6.3 5.5Q5.6 5.9 5.6 6.8" fill="none" stroke="#e2e2e2" stroke-width="1.3"/><circle cx="5.6" cy="8.4" r="0.8" fill="#e2e2e2"/></svg>
<svg class="i" style="left:997px;top:17.5px;" width="18" height="18" viewBox="0 0 18 18"><defs><radialGradient id="av" cx="0.45" cy="0.7" r="0.7"><stop offset="0" stop-color="#fffdf2"/><stop offset="0.45" stop-color="#efe3a8"/><stop offset="1" stop-color="#cdbd6e"/></radialGradient></defs><circle cx="9" cy="8.8" r="8" fill="url(#av)"/><path d="M7.2 5.2Q10 1.6 14.4 4.4Q16.4 6.6 15.2 9.2Q13.6 6.6 10.8 7.4Q9 7.6 7.2 5.2Z" fill="#6e5a36"/><ellipse cx="10" cy="12.2" rx="3.6" ry="3.4" fill="#fffef8"/><path d="M3 6.5Q5 4.4 7 6.4" stroke="#b9a85a" stroke-width="1" fill="none"/></svg>
<div style="position:absolute;left:8.6px;top:43.8px;width:70.4px;height:38.8px;border:1px solid #dedede;border-radius:2.5px;background:#f1f1f1;"></div>
<span class="t" style="left:28.20px;top:59.90px;font-size:7.8px;line-height:7.8px;color:#3c3c3c;font-weight:bold;transform:scaleX(0.8360);">DESIGN</span>
<svg class="i" style="left:57.2px;top:62.6px" width="4.0" height="3.0" viewBox="0 0 4 3"><path d="M0.2 0.3H3.6L1.9 2.5Z" fill="#3c3c3c"/></svg>
<span class="t" style="left:100.60px;top:40.75px;font-size:8.1px;line-height:8.1px;color:#1c8ed0;transform:scaleX(0.8557);">SOLID</span>
<div style="position:absolute;left:92.4px;top:50px;width:37.19999999999999px;height:2.200000000000003px;background:#2196d8;"></div>
<span class="t" style="left:152.40px;top:40.75px;font-size:8.1px;line-height:8.1px;color:#555;transform:scaleX(0.7998);">SURFACE</span>
<span class="t" style="left:214.00px;top:40.75px;font-size:8.1px;line-height:8.1px;color:#555;transform:scaleX(0.7777);">MESH</span>
<span class="t" style="left:262.70px;top:40.75px;font-size:8.1px;line-height:8.1px;color:#555;transform:scaleX(0.7926);">FORM</span>
<span class="t" style="left:311.50px;top:40.75px;font-size:8.1px;line-height:8.1px;color:#555;transform:scaleX(0.8016);">SHEET METAL</span>
<span class="t" style="left:386.80px;top:40.75px;font-size:8.1px;line-height:8.1px;color:#555;transform:scaleX(0.8116);">PLASTIC</span>
<span class="t" style="left:445.50px;top:40.75px;font-size:8.1px;line-height:8.1px;color:#555;transform:scaleX(0.7539);">UTILITIES</span>
<span class="t" style="left:143.00px;top:80.75px;font-size:8.1px;line-height:8.1px;color:#4a4a4a;transform:scaleX(0.7751);">CREATE</span>
<svg class="i" style="left:172.1px;top:83.2px" width="4.0" height="3.0" viewBox="0 0 4 3"><path d="M0.2 0.3H3.6L1.9 2.5Z" fill="#3a3a3a"/></svg>
<span class="t" style="left:244.00px;top:80.75px;font-size:8.1px;line-height:8.1px;color:#4a4a4a;transform:scaleX(0.8361);">AUTOMATE</span>
<svg class="i" style="left:284.6px;top:83.2px" width="4.0" height="3.0" viewBox="0 0 4 3"><path d="M0.2 0.3H3.6L1.9 2.5Z" fill="#3a3a3a"/></svg>
<span class="t" style="left:384.20px;top:80.75px;font-size:8.1px;line-height:8.1px;color:#4a4a4a;transform:scaleX(0.7874);">MODIFY</span>
<svg class="i" style="left:413.0px;top:83.2px" width="4.0" height="3.0" viewBox="0 0 4 3"><path d="M0.2 0.3H3.6L1.9 2.5Z" fill="#3a3a3a"/></svg>
<span class="t" style="left:515.70px;top:80.75px;font-size:8.1px;line-height:8.1px;color:#4a4a4a;transform:scaleX(0.8015);">ASSEMBLE</span>
<svg class="i" style="left:555.2px;top:83.2px" width="4.0" height="3.0" viewBox="0 0 4 3"><path d="M0.2 0.3H3.6L1.9 2.5Z" fill="#3a3a3a"/></svg>
<span class="t" style="left:579.00px;top:80.75px;font-size:8.1px;line-height:8.1px;color:#4a4a4a;transform:scaleX(0.7965);">CONSTRUCT</span>
<svg class="i" style="left:623.4px;top:83.2px" width="4.0" height="3.0" viewBox="0 0 4 3"><path d="M0.2 0.3H3.6L1.9 2.5Z" fill="#3a3a3a"/></svg>
<span class="t" style="left:644.50px;top:80.75px;font-size:8.1px;line-height:8.1px;color:#4a4a4a;transform:scaleX(0.7606);">INSPECT</span>
<svg class="i" style="left:675.2px;top:83.2px" width="4.0" height="3.0" viewBox="0 0 4 3"><path d="M0.2 0.3H3.6L1.9 2.5Z" fill="#3a3a3a"/></svg>
<span class="t" style="left:697.50px;top:80.75px;font-size:8.1px;line-height:8.1px;color:#4a4a4a;transform:scaleX(0.7443);">INSERT</span>
<svg class="i" style="left:723.8000000000001px;top:83.2px" width="4.0" height="3.0" viewBox="0 0 4 3"><path d="M0.2 0.3H3.6L1.9 2.5Z" fill="#3a3a3a"/></svg>
<span class="t" style="left:743.50px;top:80.75px;font-size:8.1px;line-height:8.1px;color:#4a4a4a;transform:scaleX(0.7775);">SELECT</span>
<svg class="i" style="left:771.8000000000001px;top:83.2px" width="4.0" height="3.0" viewBox="0 0 4 3"><path d="M0.2 0.3H3.6L1.9 2.5Z" fill="#3a3a3a"/></svg>
<div style="position:absolute;left:233.7px;top:56px;width:1.0px;height:31.599999999999994px;background:#dadada;"></div>
<div style="position:absolute;left:296.1px;top:56px;width:1.0px;height:31.599999999999994px;background:#dadada;"></div>
<div style="position:absolute;left:504.3px;top:56px;width:1.0px;height:31.599999999999994px;background:#dadada;"></div>
<div style="position:absolute;left:568.5px;top:56px;width:1.0px;height:31.599999999999994px;background:#dadada;"></div>
<div style="position:absolute;left:634.7px;top:56px;width:1.0px;height:31.599999999999994px;background:#dadada;"></div>
<div style="position:absolute;left:687.7px;top:56px;width:1.0px;height:31.599999999999994px;background:#dadada;"></div>
<div style="position:absolute;left:733.5px;top:56px;width:1.0px;height:31.599999999999994px;background:#dadada;"></div>
<svg class="i" style="left:0;top:0" width="1024" height="92" viewBox="0 0 1024 92"><path d="M91.4 62.6Q101 56.6 112.4 63.2L113 68.6Q112.6 71 110.6 72.4Q103 67.4 96 73.4L91.6 69.4Z" fill="#4d9fe2"/><path d="M91.4 62.6Q101 56.6 112.4 63.2L109.4 66.6Q102 62.2 95.6 67Z" fill="#6db3ec"/><path d="M112.4 63.2L113 68.6Q112.6 71 110.6 72.4L109.2 66.8Z" fill="#fff" stroke="#666" stroke-width="0.5"/><path d="M92.4 58.8Q101 54 110.6 59" fill="none" stroke="#333" stroke-width="0.8"/><path d="M91.4 59.6L94.4 57.4L94 60.2Z" fill="#333"/><path d="M120.4 59L124.2 54.8H141.2V71.6L137.6 75.6H120.4Z" fill="#c9c9c9" stroke="#8f8f8f" stroke-width="0.7"/><rect x="120.6" y="59" width="16.8" height="16.4" fill="#e3e3e3" stroke="#9a9a9a" stroke-width="0.6"/><circle cx="129.2" cy="66.9" r="5.4" fill="#4d9fe2" stroke="#7d8a95" stroke-width="0.9"/><path d="M129.4 62.4A4.6 4.6 0 0 1 133.8 67.8A6 6 0 0 0 129.4 62.4Z" fill="#fff" stroke="#fff" stroke-width="1.2" stroke-linejoin="round"/><path d="M149.6 72.4L163.4 72.4L165.4 70V73L163.4 75.4H149.6Z" fill="#c4c8cc"/><path d="M149.4 57.4L152 54.8H165.2V70.2L163 72.8H149.4Z" fill="#3b87cf"/><rect x="149.4" y="57.4" width="13.6" height="15.4" fill="#4d9fe2"/><path d="M149.4 57.4L152 54.8H165.2L163 57.4Z" fill="#6db3ec"/><path d="M167.6 72V57" stroke="#222" stroke-width="0.8"/><path d="M166.2 58L167.6 55.6L169 58Z" fill="#222"/><path d="M182 58.3H191.4M179.6 60.6V70M182 72.2H191.4" stroke="#7a7a7a" stroke-width="0.7" fill="none"/><rect x="177.5" y="56.2" width="4.2" height="4.2" fill="#fff" stroke="#666" stroke-width="0.7"/><rect x="191.4" y="56" width="4.5" height="4.6" fill="#4d9fe2"/><rect x="177.3" y="70" width="4.6" height="4.5" fill="#4d9fe2"/><rect x="191.4" y="70" width="4.5" height="4.5" fill="#4d9fe2"/><path d="M207 55.6H225.3V64M207 55.6V73.6H217" fill="none" stroke="#777" stroke-width="0.8"/><rect x="206.2" y="54.800000000000004" width="1.6" height="1.6" fill="#444"/><rect x="224.5" y="54.800000000000004" width="1.6" height="1.6" fill="#444"/><rect x="206.2" y="72.8" width="1.6" height="1.6" fill="#444"/><path d="M211.4 68.8V60H221.4Q220.6 67.4 211.4 68.8Z" fill="#f4f4f4" stroke="#666" stroke-width="0.7"/><circle cx="211.4" cy="60" r="0.9" fill="#444"/><circle cx="221.4" cy="60" r="0.9" fill="#444"/><circle cx="211.4" cy="68.8" r="0.9" fill="#444"/><path d="M222.6 66.6V75.8M218 71.2H227.2" stroke="#2fa84f" stroke-width="2.4" fill="none"/><path d="M258.6 58.4L264.8 69L272 60.6" fill="none" stroke="#5a96cc" stroke-width="1.6"/><path d="M261.6 63H268.6L264.8 70Z" fill="#8fbce2" stroke="#5a96cc" stroke-width="0.9"/><rect x="255.8" y="55.2" width="4" height="4" fill="#fff" stroke="#666" stroke-width="0.8"/><path d="M273.2 56.6L276 59.2L274 62.2L270.6 61.4L270.4 58.2Z" fill="#fff" stroke="#666" stroke-width="0.8"/><circle cx="264.8" cy="72.4" r="3.1" fill="#d6e6f4" stroke="#4f86bb" stroke-width="1.3"/><circle cx="264.8" cy="72.4" r="1" fill="#4f86bb"/><path d="M304.4 59.4L308.6 55H315Q325.6 55.6 325.6 66V71.2L321.4 75.4H304.4Z" fill="#c9c9c9" stroke="#8f8f8f" stroke-width="0.6"/><path d="M304.6 59.4H312Q321.4 60 321.4 69V75.2H304.6Z" fill="#e3e3e3"/><path d="M312.6 59.2L315.4 55Q325.6 55.6 325.6 66L321.4 67.6Q321 60 312.6 59.2Z" fill="#4d9fe2"/><path d="M334.4 59.6L338 55H339.6V75.4H334.4Z" fill="#e3e3e3" stroke="#8f8f8f" stroke-width="0.6"/><path d="M339.4 55H348.6V71L345.2 75.4H339.4Z" fill="#4d9fe2"/><path d="M345.2 59.4L348.6 55V71L345.2 75.4Z" fill="#3b87cf"/><path d="M346.6 65H351" stroke="#ddd" stroke-width="1"/><circle cx="351.8" cy="65" r="1.1" fill="#222"/><path d="M362.2 59.4L366 55H383.2V71L379.4 75.4H362.2Z" fill="#c9c9c9" stroke="#8f8f8f" stroke-width="0.6"/><rect x="362.3" y="59.4" width="17" height="16" fill="#e3e3e3" stroke="#999" stroke-width="0.6"/><rect x="365.4" y="62.4" width="10.8" height="10.2" fill="#fff"/><path d="M365.4 62.4H369.4V68.6H376.2V72.6H365.4Z" fill="#4d9fe2"/><path d="M365.4 68.6L369.4 68.6L365.4 72.6Z" fill="#3b87cf"/><path d="M390.6 64.4L393.6 61.4H399.2V58L402.2 55H412V66.4L409 69.4H404.6V72.4L401.6 75.6H390.6Z" fill="#3b87cf"/><path d="M390.6 64.4H401.6V75.6H390.6Z" fill="#4d9fe2"/><path d="M399.2 58H409V69.4H401.6V64.4H399.2Z" fill="#4d9fe2"/><path d="M390.6 64.4L393.6 61.4H399.2V64.4ZM399.2 58L402.2 55H412L409 58Z" fill="#6db3ec"/><path d="M420.4 68H436.6L439.6 66V72.4L436.6 75H420.4Z" fill="#c9c9c9" stroke="#aaa" stroke-width="0.5"/><rect x="420.4" y="68" width="16.2" height="7" fill="#e3e3e3"/><path d="M419 65.4L422 62.8H441L438 66.6H419Z" fill="#a8d4f5"/><path d="M420.4 57.6L423.6 54.8H439.6V61.4L436.6 64.4H420.4Z" fill="#3b87cf"/><rect x="420.4" y="57.6" width="16.2" height="6.8" fill="#4d9fe2"/><path d="M420.4 57.6L423.6 54.8H439.6L436.6 57.6Z" fill="#6db3ec"/><path d="M458.6 57V73.6M450.4 65.3H467" stroke="#2c2c2c" stroke-width="1.3" fill="none"/><path d="M458.6 55L461.4 58.6H455.8ZM458.6 75.6L461.4 72H455.8ZM448.4 65.3L452 62.5V68.1ZM469 65.3L465.4 62.5V68.1Z" fill="#2c2c2c"/><rect x="478.6" y="65.6" width="15" height="9.4" fill="#fafafa" stroke="#aaa" stroke-width="0.7"/><rect x="478.4" y="54.8" width="15.4" height="10" fill="#4d9fe2"/><path d="M476.4 65.3H496" stroke="#6db3ec" stroke-width="1"/><path d="M512.2 66.4H527.6L530.8 63.6V72.4L527.6 75.6H512.2Z" fill="#c9c9c9" stroke="#aaa" stroke-width="0.5"/><rect x="512.2" y="66.4" width="15.4" height="9.2" fill="#e3e3e3"/><path d="M519.8 66.4V75.6" stroke="#aaa" stroke-width="0.6"/><path d="M512.2 60L514.6 57.4H521.4V64L519.6 66.4H512.2Z" fill="#3b87cf"/><rect x="512.2" y="60" width="7.4" height="6.4" rx="0.8" fill="#4d9fe2"/><path d="M512.2 60L514.6 57.4H521.4L519.6 60Z" fill="#6db3ec"/><path d="M528.4 55.2L529.4 57.6L531.8 56.6L530.8 59L533.2 60L530.8 61L531.8 63.4L529.4 62.4L528.4 64.8L527.4 62.4L525 63.4L526 61L523.6 60L526 59L525 56.6L527.4 57.6Z" fill="#f5a623"/><circle cx="528.4" cy="60" r="2.4" fill="#f7941d"/><path d="M542.6 60.4L546 56.4L550.6 56L551.8 58.6L549.4 61.6L551.2 64V69.4L543.4 73.8L542.6 72.6Z" fill="#b9b9b9" stroke="#8f8f8f" stroke-width="0.6"/><path d="M542.6 60.4L546 56.4L546.6 69.6L543.4 73.8Z" fill="#a4a4a4"/><path d="M553.2 63.6L555.4 60.4L557.4 57.6L561.2 61V74.4L553.2 70.6Z" fill="#cdcdcd" stroke="#8f8f8f" stroke-width="0.6"/><path d="M557.4 57.6L561.2 61V74.4L558.4 72.8Z" fill="#b1b1b1"/><path d="M551.4 60.4L553.8 59L552.6 63.6L551.2 64Z" fill="#9fd0f2"/><path d="M592.6 61.4L598.6 56V70.4L592.6 75Z" fill="#b5b5b5"/><path d="M592.8 61.6H598.4V75H592.8Z" fill="#dcdcdc" stroke="#999" stroke-width="0.6"/><path d="M592.8 61.6L599 55.8H604.8L598.4 61.6Z" fill="#c4c4c4" stroke="#999" stroke-width="0.5"/><path d="M598.6 61.4L604.8 55.6V68L598.6 73.8Z" fill="#4db86f"/><path d="M607 61.6L612.8 55.6V68.4L607 74.4Z" fill="#f0935a"/><path d="M653 63H670.8M652.8 60V66M671 60V66" stroke="#555" stroke-width="0.7" fill="none"/><path d="M653 63L655.4 61.8V64.2ZM670.8 63L668.4 61.8V64.2Z" fill="#555"/><rect x="652.6" y="66.6" width="18.6" height="4.2" fill="#f5a623"/><path d="M654.4 66.6V69" stroke="#b87410" stroke-width="0.5"/><path d="M656.3 66.6V68.4" stroke="#b87410" stroke-width="0.5"/><path d="M658.1 66.6V69" stroke="#b87410" stroke-width="0.5"/><path d="M660.0 66.6V68.4" stroke="#b87410" stroke-width="0.5"/><path d="M661.8 66.6V69" stroke="#b87410" stroke-width="0.5"/><path d="M663.7 66.6V68.4" stroke="#b87410" stroke-width="0.5"/><path d="M665.6 66.6V69" stroke="#b87410" stroke-width="0.5"/><path d="M667.4 66.6V68.4" stroke="#b87410" stroke-width="0.5"/><path d="M669.3 66.6V69" stroke="#b87410" stroke-width="0.5"/><rect x="701.2" y="55" width="19.4" height="19.4" fill="#7cc1f2"/><path d="M701.2 74.4V67.4Q706 58.4 711 67.6Q712.6 70.4 714.6 68.2Q717 66 720.6 71.4V74.4Z" fill="#3f88c8"/><circle cx="715.3" cy="60.6" r="2" fill="#f7f7e0"/><rect x="701.2" y="55" width="19.4" height="19.4" fill="none" stroke="#5aa0d8" stroke-width="0.5"/><rect x="746.7" y="52.6" width="25.2" height="25.3" fill="#1b8fd3"/><rect x="749.8" y="55.8" width="17.6" height="13.4" fill="none" stroke="#5cb6e8" stroke-width="1" stroke-dasharray="1.4 1.4"/><path d="M763 65.2L769.8 71.4L766.8 71.6L768.4 75L767 75.6L765.4 72.2L763.2 74Z" fill="#fff"/></svg>
<div style="position:absolute;left:5.6px;top:116.2px;width:3.200000000000001px;height:96.2px;background:#a9a9a9;"></div>
<div style="position:absolute;left:5.6px;top:212.4px;width:3.200000000000001px;height:356.6px;background:#d9d9d9;"></div>
<div style="position:absolute;left:2.6px;top:96.4px;width:199px;height:14.8px;background:#efefef;border:0.6px solid #dadada;box-sizing:content-box;"></div>
<svg class="i" style="left:6px;top:102.4px;" width="7" height="5" viewBox="0 0 7 5"><path d="M3.2 0.2V4.6L0.2 2.4ZM6.6 0.2V4.6L3.6 2.4Z" fill="#333"/></svg>
<span class="t" style="left:19.60px;top:100.95px;font-size:7.7px;line-height:7.7px;color:#666;transform:scaleX(0.8646);">BROWSER</span>
<svg class="i" style="left:188px;top:101px;" width="7" height="7" viewBox="0 0 7 7"><circle cx="3.4" cy="3.4" r="3" fill="#333"/><path d="M1.6 3.4H5.2" stroke="#efefef" stroke-width="0.9"/></svg>
<div style="position:absolute;left:198.8px;top:100.6px;width:0.799999999999983px;height:7.400000000000006px;background:#999;"></div>
<div style="position:absolute;left:200.2px;top:102px;width:0.6000000000000227px;height:4.599999999999994px;background:#bbb;"></div>
<div class="row" style="left:26.3px;top:116.3px;width:135.3px"></div>
<svg class="i" style="left:13.6px;top:118.8px;" width="9" height="8" viewBox="0 0 9 8"><path d="M0.6 7.4H7.6V0.8Z" fill="#aaa" stroke="#333" stroke-width="0.8" stroke-linejoin="round"/></svg>
<svg class="i" style="left:28.9px;top:119px;" width="11" height="8" viewBox="0 0 11 8"><path d="M0.4 3.6Q5 -0.8 9.8 3.6Q5 7.8 0.4 3.6Z" fill="#d4d4d4" stroke="#8c8c8c" stroke-width="0.9"/><circle cx="5.1" cy="3.6" r="2" fill="#8c8c8c"/><circle cx="5.1" cy="3.6" r="0.8" fill="#ddd"/></svg>
<div style="position:absolute;left:43.2px;top:117.2px;width:102.7px;height:10.799999999999997px;background:#9b9b9b;"></div>
<svg class="i" style="left:45.6px;top:117.8px;" width="10" height="10" viewBox="0 0 10 10"><path d="M0.4 1.8L2 0.4H9V7.6L7.4 9.4H0.4Z" fill="#d8d8d8" stroke="#f4f4f4" stroke-width="0.6"/><rect x="0.6" y="2" width="6.8" height="7.2" rx="0.8" fill="#f6f6f6"/><path d="M7.4 2L9 0.6V7.6L7.4 9.2Z" fill="#c4c4c4"/></svg>
<span class="t" style="left:65.30px;top:119.10px;font-size:7.4px;line-height:7.4px;color:#fff;font-weight:bold;transform:scaleX(0.9274);">0RX005 BOOSTER v87</span>
<svg class="i" style="left:148.4px;top:118px;" width="10" height="10" viewBox="0 0 10 10"><circle cx="4.8" cy="4.7" r="4" fill="#fff" stroke="#333" stroke-width="0.8"/><circle cx="4.8" cy="4.7" r="1.7" fill="#333"/></svg>
<div class="row" style="left:38.8px;top:132.3px;width:89.2px"></div>
<svg class="i" style="left:26px;top:134.0px;" width="8" height="10" viewBox="0 0 8 10"><path d="M0.8 0.8V8.8L6.4 4.8Z" fill="none" stroke="#555" stroke-width="0.9" stroke-linejoin="round"/></svg>
<svg class="i" style="left:40.7px;top:133.2px;" width="11" height="11" viewBox="0 0 11 11"><g transform="translate(5.3,5.3)"><rect x="-1.1" y="-5.2" width="2.2" height="2.6" fill="#8a8a8a" transform="rotate(0)"/><rect x="-1.1" y="-5.2" width="2.2" height="2.6" fill="#8a8a8a" transform="rotate(45)"/><rect x="-1.1" y="-5.2" width="2.2" height="2.6" fill="#8a8a8a" transform="rotate(90)"/><rect x="-1.1" y="-5.2" width="2.2" height="2.6" fill="#8a8a8a" transform="rotate(135)"/><rect x="-1.1" y="-5.2" width="2.2" height="2.6" fill="#8a8a8a" transform="rotate(180)"/><rect x="-1.1" y="-5.2" width="2.2" height="2.6" fill="#8a8a8a" transform="rotate(225)"/><rect x="-1.1" y="-5.2" width="2.2" height="2.6" fill="#8a8a8a" transform="rotate(270)"/><rect x="-1.1" y="-5.2" width="2.2" height="2.6" fill="#8a8a8a" transform="rotate(315)"/><circle r="3.7" fill="#8a8a8a"/><circle r="1.7" fill="#f0f0f0"/></g></svg>
<span class="t" style="left:60.50px;top:135.05px;font-size:7.5px;line-height:7.5px;color:#333;transform:scaleX(0.9454);">Document Settings</span>
<div class="row" style="left:38.8px;top:148.3px;width:72.9px"></div>
<svg class="i" style="left:26px;top:150.0px;" width="8" height="10" viewBox="0 0 8 10"><path d="M0.8 0.8V8.8L6.4 4.8Z" fill="none" stroke="#555" stroke-width="0.9" stroke-linejoin="round"/></svg>
<svg class="i" style="left:40.7px;top:150.0px;" width="11" height="9" viewBox="0 0 11 9"><path d="M0.2 0.3H4.4L5.2 1.6H10.4V8.5H0.2Z" fill="#9b9b9b"/><path d="M0.2 2.4H10.4" stroke="#b5b5b5" stroke-width="0.5"/></svg>
<span class="t" style="left:60.50px;top:151.05px;font-size:7.5px;line-height:7.5px;color:#333;transform:scaleX(0.9777);">Named Views</span>
<div class="row" style="left:38.8px;top:164.3px;width:63.2px"></div>
<svg class="i" style="left:26px;top:166.0px;" width="8" height="10" viewBox="0 0 8 10"><path d="M0.8 0.8V8.8L6.4 4.8Z" fill="none" stroke="#555" stroke-width="0.9" stroke-linejoin="round"/></svg>
<svg class="i" style="left:40.8px;top:167.0px;" width="11" height="8" viewBox="0 0 11 8"><path d="M0.6 3.6Q5 -0.6 9.6 3.6Q5 7.6 0.6 3.6Z" fill="none" stroke="#c6c6c6" stroke-width="0.8"/><circle cx="5.1" cy="3.6" r="1.7" fill="none" stroke="#c6c6c6" stroke-width="0.7"/><path d="M2.4 6.4L8 0.6" stroke="#c6c6c6" stroke-width="0.6"/></svg>
<svg class="i" style="left:57.4px;top:166.0px;" width="11" height="9" viewBox="0 0 11 9"><path d="M0.2 0.3H4.4L5.2 1.6H10.4V8.5H0.2Z" fill="#9b9b9b"/><path d="M0.2 2.4H10.4" stroke="#b5b5b5" stroke-width="0.5"/></svg>
<span class="t" style="left:77.50px;top:167.05px;font-size:7.5px;line-height:7.5px;color:#333;transform:scaleX(0.9248);">Origin</span>
<div class="row" style="left:38.8px;top:180.3px;width:73.7px"></div>
<svg class="i" style="left:26px;top:182.0px;" width="8" height="10" viewBox="0 0 8 10"><path d="M0.8 0.8V8.8L6.4 4.8Z" fill="none" stroke="#555" stroke-width="0.9" stroke-linejoin="round"/></svg>
<svg class="i" style="left:40.8px;top:183.0px;" width="11" height="8" viewBox="0 0 11 8"><path d="M0.6 3.6Q5 -0.6 9.6 3.6Q5 7.6 0.6 3.6Z" fill="none" stroke="#c6c6c6" stroke-width="0.8"/><circle cx="5.1" cy="3.6" r="1.7" fill="none" stroke="#c6c6c6" stroke-width="0.7"/><path d="M2.4 6.4L8 0.6" stroke="#c6c6c6" stroke-width="0.6"/></svg>
<svg class="i" style="left:57.4px;top:182.0px;" width="11" height="9" viewBox="0 0 11 9"><path d="M0.2 0.3H4.4L5.2 1.6H10.4V8.5H0.2Z" fill="#9b9b9b"/><path d="M0.2 2.4H10.4" stroke="#b5b5b5" stroke-width="0.5"/></svg>
<span class="t" style="left:77.50px;top:183.05px;font-size:7.5px;line-height:7.5px;color:#333;transform:scaleX(0.9847);">Analysis</span>
<div class="row" style="left:38.8px;top:196.3px;width:68.2px"></div>
<svg class="i" style="left:26px;top:198.0px;" width="8" height="10" viewBox="0 0 8 10"><path d="M0.8 0.8V8.8L6.4 4.8Z" fill="none" stroke="#555" stroke-width="0.9" stroke-linejoin="round"/></svg>
<svg class="i" style="left:40.8px;top:199.0px;" width="11" height="8" viewBox="0 0 11 8"><path d="M0.4 3.6Q5 -0.8 9.8 3.6Q5 7.8 0.4 3.6Z" fill="#d4d4d4" stroke="#8c8c8c" stroke-width="0.9"/><circle cx="5.1" cy="3.6" r="2" fill="#8c8c8c"/><circle cx="5.1" cy="3.6" r="0.8" fill="#ddd"/></svg>
<svg class="i" style="left:57.4px;top:198.0px;" width="11" height="9" viewBox="0 0 11 9"><path d="M0.2 0.3H4.4L5.2 1.6H10.4V8.5H0.2Z" fill="#9b9b9b"/><path d="M0.2 2.4H10.4" stroke="#b5b5b5" stroke-width="0.5"/></svg>
<span class="t" style="left:77.50px;top:199.05px;font-size:7.5px;line-height:7.5px;color:#333;transform:scaleX(0.9376);">Bodies</span>
<div class="row" style="left:38.8px;top:212.3px;width:76.0px"></div>
<svg class="i" style="left:26px;top:214.0px;" width="8" height="10" viewBox="0 0 8 10"><path d="M0.8 0.8V8.8L6.4 4.8Z" fill="none" stroke="#555" stroke-width="0.9" stroke-linejoin="round"/></svg>
<svg class="i" style="left:40.8px;top:215.0px;" width="11" height="8" viewBox="0 0 11 8"><path d="M0.4 3.6Q5 -0.8 9.8 3.6Q5 7.8 0.4 3.6Z" fill="#d4d4d4" stroke="#8c8c8c" stroke-width="0.9"/><circle cx="5.1" cy="3.6" r="2" fill="#8c8c8c"/><circle cx="5.1" cy="3.6" r="0.8" fill="#ddd"/></svg>
<svg class="i" style="left:57.4px;top:214.0px;" width="11" height="9" viewBox="0 0 11 9"><path d="M0.2 0.3H4.4L5.2 1.6H10.4V8.5H0.2Z" fill="#9b9b9b"/><path d="M0.2 2.4H10.4" stroke="#b5b5b5" stroke-width="0.5"/></svg>
<span class="t" style="left:77.50px;top:215.05px;font-size:7.5px;line-height:7.5px;color:#333;transform:scaleX(0.9628);">Sketches</span>
<div class="row" style="left:38.8px;top:228.3px;width:67.6px"></div>
<svg class="i" style="left:40.2px;top:229.79999999999998px;" width="12" height="10" viewBox="0 0 12 10"><path d="M0.4 3.8Q5.7 0.9 11.2 3.8V7Q11 8.4 9.6 8.9Q5.7 6.8 2 9.1L0.4 7.6Z" fill="#3f93de"/><path d="M0.4 3.8Q5.7 0.9 11.2 3.8L9.6 5.3Q5.7 3.3 2 5.7Z" fill="#62aae8"/><path d="M9.9 5.6L11 4.4V7Q10.8 8 10 8.4Z" fill="#eef5fc"/><path d="M1 1.5Q5.8 -0.7 10.6 1.5" fill="none" stroke="#444" stroke-width="0.8"/></svg>
<span class="t" style="left:60.60px;top:231.05px;font-size:7.5px;line-height:7.5px;color:#333;transform:scaleX(0.9620);">Revolve193</span>
<div class="row" style="left:38.8px;top:244.3px;width:67.9px"></div>
<svg class="i" style="left:40.2px;top:245.2px;" width="12" height="11" viewBox="0 0 12 11"><path d="M0.4 5.6L4.6 0.6H8.4Q10.8 1.4 10.8 4V10H3Q0.4 9.4 0.4 7Z" fill="#dedede" stroke="#8d8d8d" stroke-width="0.7"/><path d="M1.2 5.4L5 1H8.2L3.6 6.6Z" fill="#3f93de"/></svg>
<span class="t" style="left:60.60px;top:247.05px;font-size:7.5px;line-height:7.5px;color:#333;transform:scaleX(0.9571);">Chamfer194</span>
<div class="row" style="left:38.8px;top:260.3px;width:65.0px"></div>
<svg class="i" style="left:40.6px;top:261.20000000000005px;" width="11" height="11" viewBox="0 0 11 11"><path d="M0.6 9.4L7.6 8.8L8.4 8V9.2L7.4 10.2L0.6 10.4Z" fill="#c4c8cc"/><path d="M0.6 1.6L1.8 0.4H8.2V7.8L7.4 9.2H0.6Z" fill="#3784d0"/><rect x="0.6" y="1.6" width="6.8" height="7.6" fill="#3f93de"/><path d="M9.6 0.6V8.8" stroke="#333" stroke-width="0.8"/></svg>
<span class="t" style="left:60.60px;top:263.05px;font-size:7.5px;line-height:7.5px;color:#333;transform:scaleX(0.9594);">Extrude195</span>
<div class="row" style="left:38.8px;top:276.3px;width:65.0px"></div>
<svg class="i" style="left:40.6px;top:277.20000000000005px;" width="11" height="11" viewBox="0 0 11 11"><path d="M0.6 9.4L7.6 8.8L8.4 8V9.2L7.4 10.2L0.6 10.4Z" fill="#c4c8cc"/><path d="M0.6 1.6L1.8 0.4H8.2V7.8L7.4 9.2H0.6Z" fill="#3784d0"/><rect x="0.6" y="1.6" width="6.8" height="7.6" fill="#3f93de"/><path d="M9.6 0.6V8.8" stroke="#333" stroke-width="0.8"/></svg>
<span class="t" style="left:60.60px;top:279.05px;font-size:7.5px;line-height:7.5px;color:#333;transform:scaleX(0.9594);">Extrude196</span>
<div class="row" style="left:38.8px;top:292.3px;width:65.0px"></div>
<svg class="i" style="left:40.6px;top:293.20000000000005px;" width="11" height="11" viewBox="0 0 11 11"><path d="M0.6 9.4L7.6 8.8L8.4 8V9.2L7.4 10.2L0.6 10.4Z" fill="#c4c8cc"/><path d="M0.6 1.6L1.8 0.4H8.2V7.8L7.4 9.2H0.6Z" fill="#3784d0"/><rect x="0.6" y="1.6" width="6.8" height="7.6" fill="#3f93de"/><path d="M9.6 0.6V8.8" stroke="#333" stroke-width="0.8"/></svg>
<span class="t" style="left:60.60px;top:295.05px;font-size:7.5px;line-height:7.5px;color:#333;transform:scaleX(0.9594);">Extrude197</span>
<div class="row" style="left:38.8px;top:308.3px;width:65.0px"></div>
<svg class="i" style="left:40.6px;top:309.20000000000005px;" width="11" height="11" viewBox="0 0 11 11"><path d="M0.6 9.4L7.6 8.8L8.4 8V9.2L7.4 10.2L0.6 10.4Z" fill="#c4c8cc"/><path d="M0.6 1.6L1.8 0.4H8.2V7.8L7.4 9.2H0.6Z" fill="#3784d0"/><rect x="0.6" y="1.6" width="6.8" height="7.6" fill="#3f93de"/><path d="M9.6 0.6V8.8" stroke="#333" stroke-width="0.8"/></svg>
<span class="t" style="left:60.60px;top:311.05px;font-size:7.5px;line-height:7.5px;color:#333;transform:scaleX(0.9594);">Extrude198</span>
<div class="row" style="left:38.8px;top:324.3px;width:67.9px"></div>
<svg class="i" style="left:40.2px;top:325.20000000000005px;" width="12" height="11" viewBox="0 0 12 11"><path d="M0.4 5.6L4.6 0.6H8.4Q10.8 1.4 10.8 4V10H3Q0.4 9.4 0.4 7Z" fill="#dedede" stroke="#8d8d8d" stroke-width="0.7"/><path d="M1.2 5.4L5 1H8.2L3.6 6.6Z" fill="#3f93de"/></svg>
<span class="t" style="left:60.60px;top:327.05px;font-size:7.5px;line-height:7.5px;color:#333;transform:scaleX(0.9571);">Chamfer199</span>
<div class="row" style="left:38.8px;top:340.3px;width:67.9px"></div>
<svg class="i" style="left:40.2px;top:341.20000000000005px;" width="12" height="11" viewBox="0 0 12 11"><path d="M0.4 5.6L4.6 0.6H8.4Q10.8 1.4 10.8 4V10H3Q0.4 9.4 0.4 7Z" fill="#dedede" stroke="#8d8d8d" stroke-width="0.7"/><path d="M1.2 5.4L5 1H8.2L3.6 6.6Z" fill="#3f93de"/></svg>
<span class="t" style="left:60.60px;top:343.05px;font-size:7.5px;line-height:7.5px;color:#333;transform:scaleX(0.9571);">Chamfer200</span>
<div class="row" style="left:38.8px;top:356.3px;width:67.9px"></div>
<svg class="i" style="left:40.2px;top:357.20000000000005px;" width="12" height="11" viewBox="0 0 12 11"><path d="M0.4 5.6L4.6 0.6H8.4Q10.8 1.4 10.8 4V10H3Q0.4 9.4 0.4 7Z" fill="#dedede" stroke="#8d8d8d" stroke-width="0.7"/><path d="M1.2 5.4L5 1H8.2L3.6 6.6Z" fill="#3f93de"/></svg>
<span class="t" style="left:60.60px;top:359.05px;font-size:7.5px;line-height:7.5px;color:#333;transform:scaleX(0.9571);">Chamfer201</span>
<div class="row" style="left:38.8px;top:372.3px;width:67.6px"></div>
<svg class="i" style="left:40.2px;top:373.8px;" width="12" height="10" viewBox="0 0 12 10"><path d="M0.4 3.8Q5.7 0.9 11.2 3.8V7Q11 8.4 9.6 8.9Q5.7 6.8 2 9.1L0.4 7.6Z" fill="#3f93de"/><path d="M0.4 3.8Q5.7 0.9 11.2 3.8L9.6 5.3Q5.7 3.3 2 5.7Z" fill="#62aae8"/><path d="M9.9 5.6L11 4.4V7Q10.8 8 10 8.4Z" fill="#eef5fc"/><path d="M1 1.5Q5.8 -0.7 10.6 1.5" fill="none" stroke="#444" stroke-width="0.8"/></svg>
<span class="t" style="left:60.60px;top:375.05px;font-size:7.5px;line-height:7.5px;color:#333;transform:scaleX(0.9620);">Revolve202</span>
<div class="row" style="left:38.8px;top:388.3px;width:65.0px"></div>
<svg class="i" style="left:40.6px;top:389.20000000000005px;" width="11" height="11" viewBox="0 0 11 11"><path d="M0.6 9.4L7.6 8.8L8.4 8V9.2L7.4 10.2L0.6 10.4Z" fill="#c4c8cc"/><path d="M0.6 1.6L1.8 0.4H8.2V7.8L7.4 9.2H0.6Z" fill="#3784d0"/><rect x="0.6" y="1.6" width="6.8" height="7.6" fill="#3f93de"/><path d="M9.6 0.6V8.8" stroke="#333" stroke-width="0.8"/></svg>
<span class="t" style="left:60.60px;top:391.05px;font-size:7.5px;line-height:7.5px;color:#333;transform:scaleX(0.9735);">Extrude211</span>
<div class="row" style="left:38.8px;top:404.3px;width:67.6px"></div>
<svg class="i" style="left:40.2px;top:405.8px;" width="12" height="10" viewBox="0 0 12 10"><path d="M0.4 3.8Q5.7 0.9 11.2 3.8V7Q11 8.4 9.6 8.9Q5.7 6.8 2 9.1L0.4 7.6Z" fill="#3f93de"/><path d="M0.4 3.8Q5.7 0.9 11.2 3.8L9.6 5.3Q5.7 3.3 2 5.7Z" fill="#62aae8"/><path d="M9.9 5.6L11 4.4V7Q10.8 8 10 8.4Z" fill="#eef5fc"/><path d="M1 1.5Q5.8 -0.7 10.6 1.5" fill="none" stroke="#444" stroke-width="0.8"/></svg>
<span class="t" style="left:60.60px;top:407.05px;font-size:7.5px;line-height:7.5px;color:#333;transform:scaleX(0.9620);">Revolve221</span>
<div class="row" style="left:38.8px;top:420.3px;width:67.6px"></div>
<svg class="i" style="left:40.2px;top:421.8px;" width="12" height="10" viewBox="0 0 12 10"><path d="M0.4 3.8Q5.7 0.9 11.2 3.8V7Q11 8.4 9.6 8.9Q5.7 6.8 2 9.1L0.4 7.6Z" fill="#3f93de"/><path d="M0.4 3.8Q5.7 0.9 11.2 3.8L9.6 5.3Q5.7 3.3 2 5.7Z" fill="#62aae8"/><path d="M9.9 5.6L11 4.4V7Q10.8 8 10 8.4Z" fill="#eef5fc"/><path d="M1 1.5Q5.8 -0.7 10.6 1.5" fill="none" stroke="#444" stroke-width="0.8"/></svg>
<span class="t" style="left:60.60px;top:423.05px;font-size:7.5px;line-height:7.5px;color:#333;transform:scaleX(0.9620);">Revolve222</span>
<div class="row" style="left:38.8px;top:436.3px;width:65.0px"></div>
<svg class="i" style="left:40.6px;top:437.20000000000005px;" width="11" height="11" viewBox="0 0 11 11"><path d="M0.6 9.4L7.6 8.8L8.4 8V9.2L7.4 10.2L0.6 10.4Z" fill="#c4c8cc"/><path d="M0.6 1.6L1.8 0.4H8.2V7.8L7.4 9.2H0.6Z" fill="#3784d0"/><rect x="0.6" y="1.6" width="6.8" height="7.6" fill="#3f93de"/><path d="M9.6 0.6V8.8" stroke="#333" stroke-width="0.8"/></svg>
<span class="t" style="left:60.60px;top:439.05px;font-size:7.5px;line-height:7.5px;color:#333;transform:scaleX(0.9594);">Extrude228</span>
<div class="row" style="left:38.8px;top:452.3px;width:67.9px"></div>
<svg class="i" style="left:40.2px;top:453.20000000000005px;" width="12" height="11" viewBox="0 0 12 11"><path d="M0.4 5.6L4.6 0.6H8.4Q10.8 1.4 10.8 4V10H3Q0.4 9.4 0.4 7Z" fill="#dedede" stroke="#8d8d8d" stroke-width="0.7"/><path d="M1.2 5.4L5 1H8.2L3.6 6.6Z" fill="#3f93de"/></svg>
<span class="t" style="left:60.60px;top:455.05px;font-size:7.5px;line-height:7.5px;color:#333;transform:scaleX(0.9571);">Chamfer229</span>
<div class="row" style="left:38.8px;top:468.3px;width:67.9px"></div>
<svg class="i" style="left:40.2px;top:469.20000000000005px;" width="12" height="11" viewBox="0 0 12 11"><path d="M0.4 5.6L4.6 0.6H8.4Q10.8 1.4 10.8 4V10H3Q0.4 9.4 0.4 7Z" fill="#dedede" stroke="#8d8d8d" stroke-width="0.7"/><path d="M1.2 5.4L5 1H8.2L3.6 6.6Z" fill="#3f93de"/></svg>
<span class="t" style="left:60.60px;top:471.05px;font-size:7.5px;line-height:7.5px;color:#333;transform:scaleX(0.9571);">Chamfer230</span>
<div class="row" style="left:38.8px;top:484.3px;width:67.9px"></div>
<svg class="i" style="left:40.2px;top:485.20000000000005px;" width="12" height="11" viewBox="0 0 12 11"><path d="M0.4 5.6L4.6 0.6H8.4Q10.8 1.4 10.8 4V10H3Q0.4 9.4 0.4 7Z" fill="#dedede" stroke="#8d8d8d" stroke-width="0.7"/><path d="M1.2 5.4L5 1H8.2L3.6 6.6Z" fill="#3f93de"/></svg>
<span class="t" style="left:60.60px;top:487.05px;font-size:7.5px;line-height:7.5px;color:#333;transform:scaleX(0.9571);">Chamfer231</span>
<div class="row" style="left:38.8px;top:500.3px;width:65.0px"></div>
<svg class="i" style="left:40.6px;top:501.20000000000005px;" width="11" height="11" viewBox="0 0 11 11"><path d="M0.6 9.4L7.6 8.8L8.4 8V9.2L7.4 10.2L0.6 10.4Z" fill="#c4c8cc"/><path d="M0.6 1.6L1.8 0.4H8.2V7.8L7.4 9.2H0.6Z" fill="#3784d0"/><rect x="0.6" y="1.6" width="6.8" height="7.6" fill="#3f93de"/><path d="M9.6 0.6V8.8" stroke="#333" stroke-width="0.8"/></svg>
<span class="t" style="left:60.60px;top:503.05px;font-size:7.5px;line-height:7.5px;color:#333;transform:scaleX(0.9594);">Extrude232</span>
<div class="row" style="left:38.8px;top:516.3px;width:67.9px"></div>
<svg class="i" style="left:40.2px;top:517.2px;" width="12" height="11" viewBox="0 0 12 11"><path d="M0.4 5.6L4.6 0.6H8.4Q10.8 1.4 10.8 4V10H3Q0.4 9.4 0.4 7Z" fill="#dedede" stroke="#8d8d8d" stroke-width="0.7"/><path d="M1.2 5.4L5 1H8.2L3.6 6.6Z" fill="#3f93de"/></svg>
<span class="t" style="left:60.60px;top:519.05px;font-size:7.5px;line-height:7.5px;color:#333;transform:scaleX(0.9571);">Chamfer233</span>
<div class="row" style="left:38.8px;top:532.3px;width:65.0px"></div>
<svg class="i" style="left:40.6px;top:533.2px;" width="11" height="11" viewBox="0 0 11 11"><path d="M0.6 9.4L7.6 8.8L8.4 8V9.2L7.4 10.2L0.6 10.4Z" fill="#c4c8cc"/><path d="M0.6 1.6L1.8 0.4H8.2V7.8L7.4 9.2H0.6Z" fill="#3784d0"/><rect x="0.6" y="1.6" width="6.8" height="7.6" fill="#3f93de"/><path d="M9.6 0.6V8.8" stroke="#333" stroke-width="0.8"/></svg>
<span class="t" style="left:60.60px;top:535.05px;font-size:7.5px;line-height:7.5px;color:#333;transform:scaleX(0.9594);">Extrude234</span>
<div class="row" style="left:38.8px;top:548.3px;width:67.9px"></div>
<svg class="i" style="left:40.2px;top:549.2px;" width="12" height="11" viewBox="0 0 12 11"><path d="M0.4 5.6L4.6 0.6H8.4Q10.8 1.4 10.8 4V10H3Q0.4 9.4 0.4 7Z" fill="#dedede" stroke="#8d8d8d" stroke-width="0.7"/><path d="M1.2 5.4L5 1H8.2L3.6 6.6Z" fill="#3f93de"/></svg>
<span class="t" style="left:60.60px;top:551.05px;font-size:7.5px;line-height:7.5px;color:#333;transform:scaleX(0.9571);">Chamfer235</span>
<div class="row" style="left:38.8px;top:564.3px;width:65.0px"></div>
<svg class="i" style="left:40.6px;top:565.2px;" width="11" height="11" viewBox="0 0 11 11"><path d="M0.6 9.4L7.6 8.8L8.4 8V9.2L7.4 10.2L0.6 10.4Z" fill="#c4c8cc"/><path d="M0.6 1.6L1.8 0.4H8.2V7.8L7.4 9.2H0.6Z" fill="#3784d0"/><rect x="0.6" y="1.6" width="6.8" height="7.6" fill="#3f93de"/><path d="M9.6 0.6V8.8" stroke="#333" stroke-width="0.8"/></svg>
<span class="t" style="left:60.60px;top:567.05px;font-size:7.5px;line-height:7.5px;color:#333;transform:scaleX(0.9594);">Extrude236</span>
<div style="position:absolute;left:2.6px;top:585px;width:199px;height:15.4px;background:#f0f0f0;border:0.6px solid #d6d6d6;"></div>
<span class="t" style="left:19.50px;top:589.95px;font-size:7.7px;line-height:7.7px;color:#777;transform:scaleX(0.8349);">COMMENTS</span>
<svg class="i" style="left:188px;top:590.2px;" width="7" height="7" viewBox="0 0 7 7"><circle cx="3.4" cy="3.4" r="3" fill="#333"/><path d="M1.6 3.4H5.2M3.4 1.6V5.2" stroke="#efefef" stroke-width="0.9"/></svg>
<div style="position:absolute;left:199.4px;top:589.6px;width:0.799999999999983px;height:8.0px;background:#999;"></div>
<div style="position:absolute;left:200.8px;top:591.4px;width:0.5999999999999943px;height:4.600000000000023px;background:#bbb;"></div>
<div style="position:absolute;left:0px;top:604.6px;width:1024px;height:4.399999999999977px;background:#e6eaf3;"></div>
<div style="position:absolute;left:0px;top:604.6px;width:1024px;height:1.0px;background:#d3d7e2;"></div>
<div style="position:absolute;left:432.4px;top:586.2px;width:158.0px;height:15.599999999999909px;background:#efefef;"></div>
<svg class="i" style="left:0;top:0" width="1024" height="609" viewBox="0 0 1024 609"><ellipse cx="439.6" cy="593.6" rx="5.2" ry="2.6" fill="none" stroke="#7e93ba" stroke-width="0.9"/><ellipse cx="438.6" cy="593.6" rx="2.2" ry="5.2" fill="none" stroke="#7e93ba" stroke-width="0.9"/><path d="M438.6 592.4V594.8M437.4 593.6H439.8" stroke="#445" stroke-width="0.6"/><path d="M442.6 592.2L445.2 593.8L442.4 595Z" fill="#7e93ba"/><path d="M448.9 592.9H452.09999999999997L450.5 595Z" fill="#333"/><rect x="456.6" y="591.8" width="10" height="7.2" rx="1" fill="#e4e6ea" stroke="#5a6172" stroke-width="0.9"/><rect x="458.4" y="594.2" width="6.4" height="2.4" fill="#8e96a8" stroke="#5a6172" stroke-width="0.5"/><path d="M458.2 591.6L459.6 589.8L461 591.2L462.6 589.6L464.6 591.6" fill="none" stroke="#5a6172" stroke-width="0.8"/><path d="M476.8 595.4L475 593.4Q474.6 592.4 475.8 592.6L477.2 593.6V590.4Q477.6 589.6 478.2 590.4V589.6Q478.8 588.8 479.6 589.6V589.8Q480.4 589 481 590V590.6Q481.8 590 482.4 591V592.2Q483.6 591.4 484.2 592.4Q484.2 596 482.8 597.6Q481.6 599.4 479.6 599.2Q477.6 599 476.8 595.4Z" fill="#f4f4f4" stroke="#4a4f5c" stroke-width="0.7"/><path d="M478.4 590.6V593.6M479.8 590V593.4M481.2 590.8V593.6" stroke="#4a4f5c" stroke-width="0.5"/><circle cx="494.2" cy="593.2" r="3.1" fill="#eef3f6" stroke="#4a4f5c" stroke-width="0.9"/><path d="M496.6 595.6L500 599" stroke="#333" stroke-width="1.5"/><path d="M499.4 590.4H502M500.7 589.2V591.6M499.4 593H502" stroke="#4a4f5c" stroke-width="0.6"/><circle cx="512.8" cy="592.8" r="4.3" fill="#eef3f6" stroke="#5a6172" stroke-width="0.9"/><path d="M516 596L518.8 599" stroke="#333" stroke-width="1.6"/><path d="M508.6 599.6H515" stroke="#888" stroke-width="0.5" stroke-dasharray="0.8 0.8"/><path d="M518 590V596" stroke="#888" stroke-width="0.5" stroke-dasharray="0.8 0.8"/><path d="M522.6 592.9H525.8000000000001L524.2 595Z" fill="#333"/><rect x="530.6" y="588.8" width="11.2" height="8" rx="0.8" fill="#7fa9dc" stroke="#5a6b8c" stroke-width="0.8"/><rect x="532" y="590" width="8.4" height="5.4" fill="#a8c8ee"/><path d="M534.4 598.8H538.2M536.2 596.8V598.8" stroke="#5a6172" stroke-width="1.2"/><path d="M543.4 592.9H546.6L545.0 595Z" fill="#333"/><rect x="550.8" y="588.8" width="11.2" height="10.4" fill="#dcdcdc" stroke="#8a8a8a" stroke-width="0.6"/><path d="M552.4 588.8V599.2" stroke="#7d7d7d" stroke-width="0.55"/><path d="M554.0 588.8V599.2" stroke="#7d7d7d" stroke-width="0.55"/><path d="M555.6 588.8V599.2" stroke="#7d7d7d" stroke-width="0.55"/><path d="M557.2 588.8V599.2" stroke="#7d7d7d" stroke-width="0.55"/><path d="M558.8 588.8V599.2" stroke="#7d7d7d" stroke-width="0.55"/><path d="M560.4 588.8V599.2" stroke="#7d7d7d" stroke-width="0.55"/><path d="M563.8 592.9H567.0L565.4 595Z" fill="#333"/><rect x="571.6" y="589.6" width="10" height="8.6" fill="#c9d9f2" stroke="#5d7fc4" stroke-width="0.9"/><path d="M576.6 589.6V598.2M571.6 593.9H581.6" stroke="#5d7fc4" stroke-width="0.9"/><path d="M584.4 592.9H587.6L586.0 595Z" fill="#333"/></svg>
<div style="position:absolute;left:953.8px;top:578.4px;width:76px;height:20.6px;background:#f9f9f9;border-radius:4px;box-shadow:0 1px 4px rgba(0,0,0,0.22),0 0 1px rgba(0,0,0,0.2);"></div>
<span class="t" style="left:960.40px;top:585.10px;font-size:8.4px;line-height:8.4px;color:#2a2a2a;transform:scaleX(0.7487);">デスクトップの表示</span>
<svg class="i" style="left:985px;top:599.6px;" width="6" height="3" viewBox="0 0 6 3"><path d="M0.6 0.6H1.8M3.4 0.6H4.8" stroke="#888" stroke-width="0.8"/></svg>
<svg class="i" style="left:0;top:0" width="1024" height="609" viewBox="0 0 1024 609"><defs><filter id="vb" x="-50%" y="-50%" width="200%" height="200%"><feGaussianBlur stdDeviation="2.2"/></filter></defs><ellipse cx="975" cy="156.4" rx="17" ry="3.4" fill="#9a9a9a" opacity="0.55" filter="url(#vb)"/><path d="M957.2 122.2L984.9 119.1L987.8 155L961.1 153.9Z" fill="#e0e0e0" stroke="#b4b4b4" stroke-width="0.6" stroke-dasharray="2.2 1.4"/><path d="M984.9 119.1L1000.9 117.3L1003.5 147.8L987.8 155Z" fill="#e9e9e9" stroke="#b4b4b4" stroke-width="0.6" stroke-dasharray="2.2 1.4"/><path d="M1001.5 113L1004.8 147.4" stroke="#8585de" stroke-width="1.1" fill="none"/><path d="M1004.8 147.4L983.2 157.6L983 162" stroke="#93df93" stroke-width="1.1" fill="none"/><text x="0" y="0" transform="translate(964.4,141.4) skewY(-3) scale(0.82,1)" font-family="Liberation Sans, sans-serif" font-size="7" fill="#8a8a8a">BACK</text><text x="0" y="0" transform="translate(991.6,139.6) skewY(-14) scale(0.5,1)" font-family="Liberation Sans, sans-serif" font-size="7" fill="#8a8a8a">LEFT</text><text x="997.4" y="110.6" font-family="Liberation Sans, sans-serif" font-size="7.6" fill="#7676d6">Z</text></svg>
</div></body></html>
